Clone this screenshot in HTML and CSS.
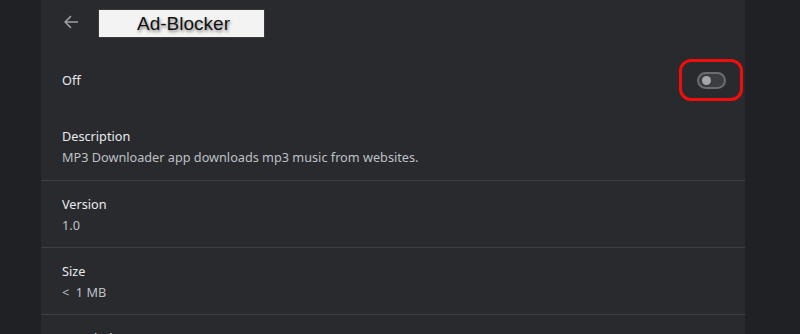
FILE: index.html
```html
<!DOCTYPE html>
<html>
<head>
<meta charset="utf-8">
<link rel="stylesheet" href="styles.css">
</head>
<body>
<div class="page">
  <main class="panel">
    <header class="header">
      <span class="back" aria-label="Back">
        <svg width="16" height="16" viewBox="0 0 16 16"><path d="M15 7.25H3.9l4.6-4.6L7.45 1.6 1.05 8l6.4 6.4 1.05-1.05-4.6-4.6H15z" fill="#9aa0a6"/></svg>
      </span>
      <div class="title-box"><span class="title">Ad-Blocker</span></div>
    </header>
    <section class="row row-toggle">
      <span class="label">Off</span>
      <span class="toggle"><span class="knob"></span></span>
    </section>
    <section class="row info">
      <div class="label">Description</div>
      <div class="value">MP3 Downloader app downloads mp3 music from websites.</div>
    </section>
    <section class="row info sep">
      <div class="label">Version</div>
      <div class="value">1.0</div>
    </section>
    <section class="row info sep">
      <div class="label">Size</div>
      <div class="value">&lt;&nbsp; 1 MB</div>
    </section>
    <section class="row info sep">
      <div class="label">Permissions</div>
    </section>
  </main>
</div>
</body>
</html>
```

FILE: styles.css
```css
html, body {
  margin: 0;
  padding: 0;
  background: #202124;
  height: 100%;
  overflow: hidden;
}
.page {
  display: flex;
  justify-content: flex-start;
  padding-left: 41px;
}
.panel {
  width: 704px;
  background: #292a2d;
  min-height: 400px;
  font-family: "Noto Sans", "Open Sans", sans-serif;
  font-size: 12.7px;
  color: #e8eaed;
}
.header {
  height: 47px;
  display: flex;
  align-items: flex-start;
  padding-left: 22px;
}
.back {
  display: flex;
  margin-top: 14px;
  width: 16px;
  height: 16px;
}
.title-box {
  margin-top: 9px;
  margin-left: 19px;
  width: 165px;
  height: 27px;
  background: #f3f3f3;
  border: 1px solid #3a3a3a;
  display: flex;
  align-items: center;
  justify-content: center;
}
.title {
  font-family: "Liberation Sans", Arial, sans-serif;
  font-size: 19px;
  color: #111;
  text-shadow: 1px 2px 3px rgba(0,0,0,0.45);
  padding-left: 4px;
}
.row {
  padding: 0 19px 0 21px;
}
.row-toggle {
  height: 66px;
  display: flex;
  align-items: center;
  justify-content: space-between;
}
.toggle {
  position: relative;
  width: 25px;
  height: 13px;
  border: 2px solid #6a6c70;
  border-radius: 10px;
  background: #3c3d41;
  display: flex;
  align-items: center;
}
.knob {
  width: 9px;
  height: 9px;
  border-radius: 50%;
  background: #a3a6aa;
  margin-left: 3px;
}
.toggle::after {
  content: "";
  position: absolute;
  left: -20px;
  top: -15px;
  width: 58px;
  height: 36px;
  border: 3px solid #f20d0d;
  border-radius: 12px;
}
.info {
  height: 67px;
  box-sizing: border-box;
  padding-top: 13px;
}
.sep {
  border-top: 1px solid #3f4043;
}
.label {
  line-height: 20px;
}
.info .value {
  line-height: 20px;
  margin-top: 1px;
  color: #bdc1c6;
}
```
